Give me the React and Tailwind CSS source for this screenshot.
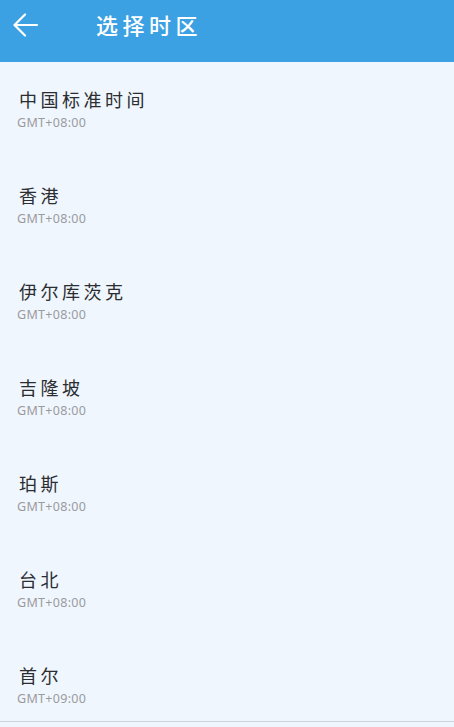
import React from "react";

const zones = [
  ["中国标准时间", "GMT+08:00"],
  ["香港", "GMT+08:00"],
  ["伊尔库茨克", "GMT+08:00"],
  ["吉隆坡", "GMT+08:00"],
  ["珀斯", "GMT+08:00"],
  ["台北", "GMT+08:00"],
  ["首尔", "GMT+09:00"],
];

export default function App() {
  return (
    <div
      className="w-[454px] h-[727px] overflow-hidden bg-[#eff6fe] flex flex-col"
      style={{ fontFamily: '"Noto Sans", "Noto Sans CJK SC", sans-serif' }}
    >
      <div className="h-[62px] shrink-0 bg-[#3ba1e3] flex items-start pt-[9px]">
        <div className="w-[96px] h-[32px] flex items-center pl-[13px]">
          <svg width="26" height="26" viewBox="0 0 26 26" fill="none" stroke="white" strokeWidth="2.2" strokeLinecap="round" strokeLinejoin="round">
            <path d="M24 13H2" />
            <path d="M12 2.5L1.5 13L12 23.5" />
          </svg>
        </div>
        <div className="text-white text-[22px] leading-[32px] tracking-[4.5px] font-medium">选择时区</div>
      </div>
      <div className="flex flex-col">
        {zones.map(([name, gmt], i) => (
          <div
            key={name}
            className={
              i === zones.length - 1
                ? "h-[84px] pl-[19px] pt-[27px] border-b border-[#cfd3d8] shrink-0"
                : "h-[96px] pl-[19px] pt-[27px] shrink-0"
            }
          >
            <div className="text-[18px] leading-[22px] tracking-[3.5px] text-[#2b2d30] font-normal">{name}</div>
            <div className="text-[12.5px] leading-[16px] tracking-[0.3px] text-[#9a9b9d] -ml-[2px] mt-[4px]" style={{ fontFamily: '"Noto Sans", sans-serif' }}>{gmt}</div>
          </div>
        ))}
      </div>
    </div>
  );
}
